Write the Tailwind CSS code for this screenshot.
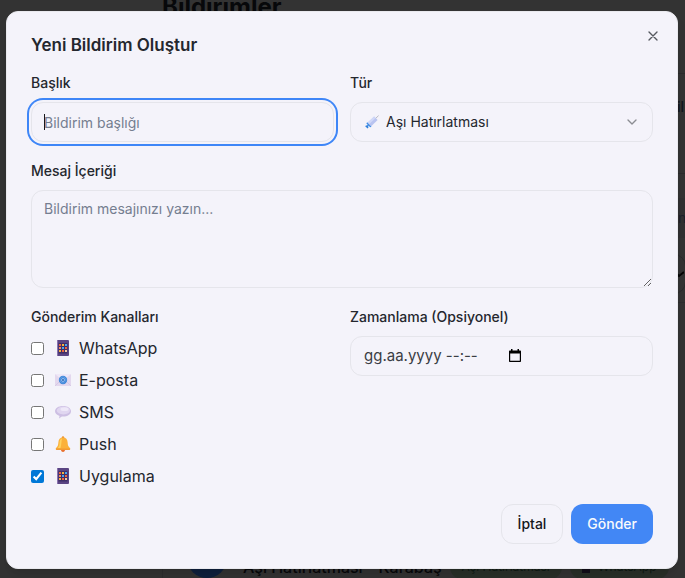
<!DOCTYPE html>
<html lang="tr">
<head>
<meta charset="utf-8">
<meta name="viewport" content="width=device-width, initial-scale=1">
<title>Yeni Bildirim Oluştur</title>
<script src="https://cdn.jsdelivr.net/npm/@tailwindcss/browser@4"></script>
</head>
<body class="relative min-h-screen overflow-hidden bg-[#333333] font-['Inter','Noto_Sans',sans-serif] text-[#24272e]">

<svg class="hidden" aria-hidden="true">
  <symbol id="phone" viewBox="0 0 16 16">
    <rect x="2" y="0" width="12" height="16" rx="1" fill="#5b4583"/>
    <rect x="2" y="0" width="1" height="16" rx=".5" fill="#8a73b0"/>
    <rect x="3.500" y="3" width="9" height="10.500" fill="#3f2f68"/>
    <path fill="#f0653f" d="M4 4h2v2H4zM10 7h2v2h-2zM7 10h2v2H7z"/>
    <path fill="#f6b13d" d="M7 4h2v2H7zM4 10h2v2H4z"/>
    <path fill="#4ba5ee" d="M10 4h2v2h-2zM7 7h2v2H7z"/>
    <path fill="#f28b5c" d="M4 7h2v2H4z"/>
    <path fill="#f3c9a0" d="M10 10h2v2h-2z"/>
  </symbol>
  <symbol id="mail" viewBox="0 0 16 16">
    <rect x="0" y="2" width="16" height="12" rx=".6" fill="#e3d8ee"/>
    <path d="M0 2h16L8 9z" fill="#efe8f7"/>
    <path d="M0 14l6-6M16 14l-6-6" stroke="#cfc0df" stroke-width=".6"/>
    <circle cx="8" cy="8" r="4.200" fill="#3f87d9"/>
    <circle cx="8" cy="8" r="1.500" fill="#2c69b8" stroke="#a9cdf5" stroke-width=".8"/>
    <path d="M9.500 6.500v2c0 1.200 1.500 1 1.500-.5a3 3 0 1 0-1.500 2.500" fill="none" stroke="#7fb2ec" stroke-width=".5"/>
  </symbol>
  <symbol id="bubble" viewBox="0 0 16 16">
    <path d="M8 2c4.600 0 8 2.200 8 5.300s-3.400 5.300-8 5.300l-1.200-.1L4 14.600l.5-2.700C1.800 11.100 0 9.400 0 7.300 0 4.200 3.400 2 8 2z" fill="#cdbfe3"/>
    <ellipse cx="8.400" cy="6.500" rx="6.600" ry="3.900" fill="#e0d6f0"/>
    <ellipse cx="9.500" cy="5.200" rx="4" ry="1.900" fill="#eee8f8"/>
  </symbol>
  <symbol id="bell" viewBox="0 0 16 16">
    <circle cx="8" cy="1.500" r="1.200" fill="#e98d2d"/>
    <circle cx="8" cy="14.200" r="1.800" fill="#e9702d"/>
    <path d="M8 1.500c3 0 4.400 2 4.600 4.800.2 3 .6 4.200 2.300 5.700.8.800.4 2-.7 2H1.800c-1.100 0-1.500-1.200-.7-2 1.700-1.500 2.100-2.700 2.300-5.700C3.600 3.500 5 1.500 8 1.500z" fill="#fbb13a"/>
    <path d="M7 2.500c-1.700.5-2.300 2-2.400 4-.1 2.600-.5 4-1.700 5.500h2.600C6.500 9 6.300 5 7 2.500z" fill="#ffd25e"/>
    <path d="M1 12.600h14c.2.800-.2 1.400-.8 1.400H1.800c-.6 0-1-.6-.8-1.400z" fill="#f39b33"/>
  </symbol>
  <symbol id="syringe" viewBox="0 0 16 16">
    <path d="M11 5L15.500.7" stroke="#a9a9b5" stroke-width=".9"/>
    <path d="M10.400 1.800l4 4-7.600 7.400-4.200-4.100z" fill="#b9c3f0"/>
    <path d="M10.400 1.800l1.700 1.700-7.800 7.300-1.700-1.700z" fill="#d0d8f8"/>
    <path d="M2.400 8.400l5 4.900-1.500.8L1.600 9.800z" fill="#3f8ee6"/>
    <path d="M3.900 11.700L2 13.600M.8 12.300l2.700 2.600" stroke="#2f7fdc" stroke-width="1.700"/>
  </symbol>
</svg>

<!-- Page under the overlay -->
<div class="absolute inset-0 overflow-hidden" aria-hidden="true">
  <div class="absolute top-[-9px] left-[162px] text-2xl leading-8 font-bold text-[#07080a]">Bildirimler</div>
  <div class="absolute top-[73px] left-[664px] h-[101px] w-12 border-y border-[#2b2b2d]"></div>
  <div class="absolute top-[97px] left-[677px] text-sm leading-5 font-medium text-[#10161d]">il</div>
  <div class="absolute top-[198px] left-[664px] h-10 w-12 bg-[#303031]"></div>
  <div class="absolute top-[208px] left-[678px] text-sm leading-5 text-[#1b1f2a]">n</div>
  <div class="absolute top-[254px] left-[640px] h-10 w-[46px] rounded-xl border border-[#2a2a2c]"></div>
  <svg class="absolute top-[270px] left-[676px] h-2 w-2" viewBox="0 0 8 8" fill="none" stroke="#050505" stroke-width="2"><path d="M1 4l2 2 5-4"/></svg>
  <div class="absolute top-[302px] left-[162px] h-72 w-[600px] border border-[#2d2d2f]"></div>
  <div class="absolute top-[538px] left-[187px] flex h-10 w-10 items-center justify-center rounded-full bg-[#0f203d]">
    <svg class="h-4 w-4 opacity-20"><use href="#syringe"/></svg>
  </div>
  <div class="absolute top-[555px] left-[243px] flex items-center gap-2 whitespace-nowrap">
    <div class="text-base leading-6 font-medium text-[#07080a]">Aşı Hatırlatması - Karabaş</div>
    <div class="rounded-full bg-[#293029] px-3 text-xs leading-6 text-[#0e1a13]">Aşı Hatırlatması</div>
    <div class="flex items-center gap-2 rounded-full bg-[#293029] px-3 text-xs leading-6 text-[#0e1a13]"><span class="h-3 w-2 bg-[#120e19]"></span>WhatsApp</div>
  </div>
</div>

<main class="relative flex min-h-screen justify-center pt-[11px] pr-[7px] pb-[9px] pl-[6px]">
  <div role="dialog" aria-modal="true" aria-labelledby="title" class="relative w-full max-w-2xl rounded-xl border border-[#e9e9ee] bg-[#f4f3fa] p-6 shadow-lg">
    <h1 id="title" class="text-[17px] leading-[18px] font-semibold">Yeni Bildirim Oluştur</h1>
    <button type="button" aria-label="Kapat" class="absolute top-4 right-4 flex h-4 w-4 items-center justify-center text-[#55585f]">
      <svg class="h-4 w-4" viewBox="0 0 24 24" fill="none" stroke="currentColor" stroke-width="2" stroke-linecap="round"><path d="M18 6L6 18M6 6l12 12"/></svg>
    </button>

    <form class="mt-4 flex flex-col gap-4">
      <div class="grid grid-cols-2 gap-4">
        <div class="flex flex-col gap-[7px]">
          <label for="baslik" class="pt-px text-sm leading-6 font-medium">Başlık</label>
          <div class="relative">
            <input id="baslik" type="text" placeholder="Bildirim başlığı" class="h-10 w-full rounded-xl border border-[#e5e5eb] bg-[#f4f3fa] px-3 text-sm ring-2 ring-[#3e86f7] ring-offset-2 ring-offset-[#f4f3fa] outline-none placeholder:text-[#757e90]">
            <span class="absolute top-3 left-[13px] h-4 w-px bg-[#16181d]" aria-hidden="true"></span>
          </div>
        </div>
        <div class="flex flex-col gap-[7px]">
          <label for="tur" class="pt-px text-sm leading-6 font-medium">Tür</label>
          <div class="relative">
            <select id="tur" class="h-10 w-full appearance-none rounded-xl border border-[#e5e5eb] bg-transparent pr-9 pl-[35px] text-sm">
              <option>Aşı Hatırlatması</option>
            </select>
            <svg class="pointer-events-none absolute top-[13px] left-[15px] h-[14px] w-[14px]" aria-hidden="true"><use href="#syringe"/></svg>
            <svg class="pointer-events-none absolute top-3 right-[13px] h-4 w-4 text-[#8b8c92]" viewBox="0 0 24 24" fill="none" stroke="currentColor" stroke-width="2" stroke-linecap="round" stroke-linejoin="round" aria-hidden="true"><path d="M6 9l6 6 6-6"/></svg>
          </div>
        </div>
      </div>

      <div class="flex flex-col gap-[7px]">
        <label for="mesaj" class="pt-px text-sm leading-6 font-medium">Mesaj İçeriği</label>
        <textarea id="mesaj" rows="4" placeholder="Bildirim mesajınızı yazın..." class="w-full resize-y rounded-xl border border-[#e5e5eb] px-3 py-2 text-sm leading-5 placeholder:text-[#757e90]"></textarea>
      </div>

      <div class="grid grid-cols-2 gap-4">
        <fieldset>
          <legend class="mb-[7px] pt-px text-sm leading-6 font-medium">Gönderim Kanalları</legend>
          <div class="flex flex-col gap-2">
            <label class="flex items-center gap-[11px] leading-6"><input type="checkbox" class="h-[13px] w-[13px] accent-[#0078d7]"><span class="flex items-center gap-2"><svg class="h-4 w-4" aria-hidden="true"><use href="#phone"/></svg>WhatsApp</span></label>
            <label class="flex items-center gap-[11px] leading-6"><input type="checkbox" class="h-[13px] w-[13px] accent-[#0078d7]"><span class="flex items-center gap-2"><svg class="h-4 w-4" aria-hidden="true"><use href="#mail"/></svg>E-posta</span></label>
            <label class="flex items-center gap-[11px] leading-6"><input type="checkbox" class="h-[13px] w-[13px] accent-[#0078d7]"><span class="flex items-center gap-2"><svg class="h-4 w-4" aria-hidden="true"><use href="#bubble"/></svg>SMS</span></label>
            <label class="flex items-center gap-[11px] leading-6"><input type="checkbox" class="h-[13px] w-[13px] accent-[#0078d7]"><span class="flex items-center gap-2"><svg class="h-4 w-4" aria-hidden="true"><use href="#bell"/></svg>Push</span></label>
            <label class="flex items-center gap-[11px] leading-6"><input type="checkbox" checked class="h-[13px] w-[13px] accent-[#0078d7]"><span class="flex items-center gap-2"><svg class="h-4 w-4" aria-hidden="true"><use href="#phone"/></svg>Uygulama</span></label>
          </div>
        </fieldset>
        <div class="flex flex-col gap-[7px]">
          <label for="zaman" class="pt-px text-sm leading-6 font-medium">Zamanlama (Opsiyonel)</label>
          <div class="flex h-10 items-center rounded-xl border border-[#e5e5eb] px-[13px]">
            <input id="zaman" type="text" placeholder="gg.aa.yyyy --:--" class="w-[144px] text-[15px] outline-none placeholder:text-[#3a3d44]">
            <button type="button" aria-label="Takvimi aç" class="text-black">
              <svg class="h-[14px] w-[14px]" viewBox="0 0 14 14" fill="currentColor"><path fill-rule="evenodd" d="M3 0h1.500v1.500h5V0H11v1.500h1c.6 0 1 .4 1 1V12c0 .6-.4 1-1 1H2c-.6 0-1-.4-1-1V2.500c0-.6.400-1 1-1h1zM2.200 4.500v7.300h9.600V4.500z"/></svg>
            </button>
          </div>
        </div>
      </div>

      <div class="flex justify-end gap-2">
        <button type="button" class="h-10 rounded-xl border border-[#e5e5eb] px-4 text-sm font-medium text-[#15171c]">İptal</button>
        <button type="submit" class="h-10 rounded-xl bg-[#4287f5] px-4 text-sm font-medium text-[#f8fafc]">Gönder</button>
      </div>
    </form>
  </div>
</main>
</body>
</html>
